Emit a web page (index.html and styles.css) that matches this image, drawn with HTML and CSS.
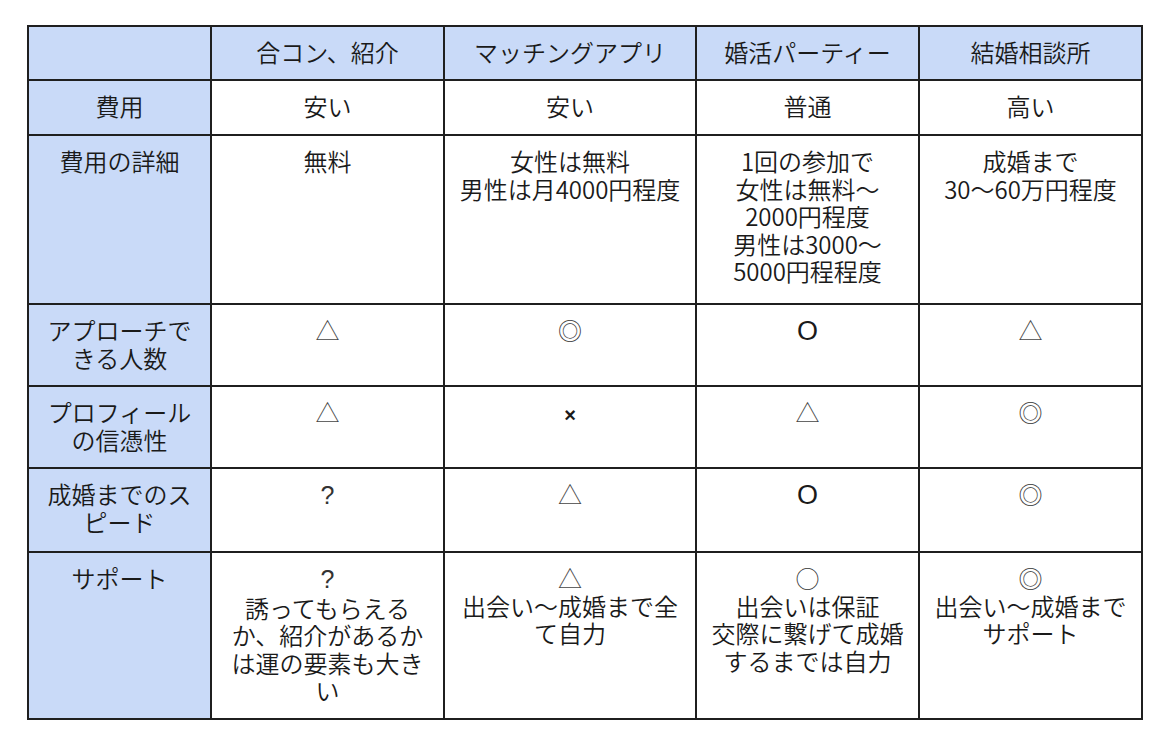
FILE: index.html
```html
<!DOCTYPE html>
<html lang="ja">
<head>
<meta charset="utf-8">
<title>比較表</title>
<link rel="stylesheet" href="styles.css">
</head>
<body>
<div class="table">
  <div class="cell head"></div>
  <div class="cell head">合コン、紹介</div>
  <div class="cell head">マッチングアプリ</div>
  <div class="cell head">婚活パーティー</div>
  <div class="cell head">結婚相談所</div>

  <div class="cell label">費用</div>
  <div class="cell">安い</div>
  <div class="cell">安い</div>
  <div class="cell">普通</div>
  <div class="cell">高い</div>

  <div class="cell label">費用の詳細</div>
  <div class="cell">無料</div>
  <div class="cell">女性は無料<br>男性は月4000円程度</div>
  <div class="cell">1回の参加で<br>女性は無料～<br>2000円程度<br>男性は3000～<br>5000円程程度</div>
  <div class="cell">成婚まで<br>30～60万円程度</div>

  <div class="cell label">アプローチで<br>きる人数</div>
  <div class="cell"><span class="tri">△</span></div>
  <div class="cell"><span class="dbl">◎</span></div>
  <div class="cell"><span class="oh">O</span></div>
  <div class="cell"><span class="tri">△</span></div>

  <div class="cell label">プロフィール<br>の信憑性</div>
  <div class="cell"><span class="tri">△</span></div>
  <div class="cell"><span class="x">×</span></div>
  <div class="cell"><span class="tri">△</span></div>
  <div class="cell"><span class="dbl">◎</span></div>

  <div class="cell label">成婚までのス<br>ピード</div>
  <div class="cell"><span class="q">?</span></div>
  <div class="cell"><span class="tri">△</span></div>
  <div class="cell"><span class="oh">O</span></div>
  <div class="cell"><span class="dbl">◎</span></div>

  <div class="cell label">サポート</div>
  <div class="cell"><span class="q">?</span><br>誘ってもらえる<br>か、紹介があるか<br>は運の要素も大き<br>い</div>
  <div class="cell"><span class="tri">△</span><br>出会い～成婚まで全<br>て自力</div>
  <div class="cell"><span class="circ">○</span><br>出会いは保証<br>交際に繋げて成婚<br>するまでは自力</div>
  <div class="cell"><span class="dbl">◎</span><br>出会い～成婚まで<br>サポート</div>
</div>
</body>
</html>
```
FILE: styles.css
```css
html, body {
  margin: 0;
  padding: 0;
  background: #ffffff;
}

body {
  font-family: "Noto Sans CJK JP", "Noto Sans", sans-serif;
  font-weight: 350;
  color: #1a1a1a;
}

.table {
  box-sizing: border-box;
  width: 1116px;
  margin: 25px 0 0 27px;
  padding: 2px;
  background: #1f1f1f;
  display: grid;
  grid-template-columns: 181px 231px 250px 221px 221px;
  grid-template-rows: 52px 53px 167px 80px 80px 82px 165px;
  gap: 2px;
}

.cell {
  background: #ffffff;
  text-align: center;
  font-size: 24px;
  line-height: 27.5px;
  padding-top: 11px;
  white-space: nowrap;
  overflow: hidden;
}

.head,
.label {
  background: #c9daf8;
}

.tri {
  color: #444;
  font-weight: 300;
}

.dbl {
  color: #333;
  font-weight: 300;
}

.oh {
  font-family: "Liberation Sans", sans-serif;
  font-weight: 400;
  font-size: 27px;
}

.circ {
  color: #333;
  font-weight: 300;
}

.x {
  font-family: "Liberation Sans", sans-serif;
  font-size: 20px;
  font-weight: bold;
}

.q {
  font-family: "Liberation Sans", sans-serif;
  font-weight: 400;
  font-size: 25px;
  color: #333;
}
```
